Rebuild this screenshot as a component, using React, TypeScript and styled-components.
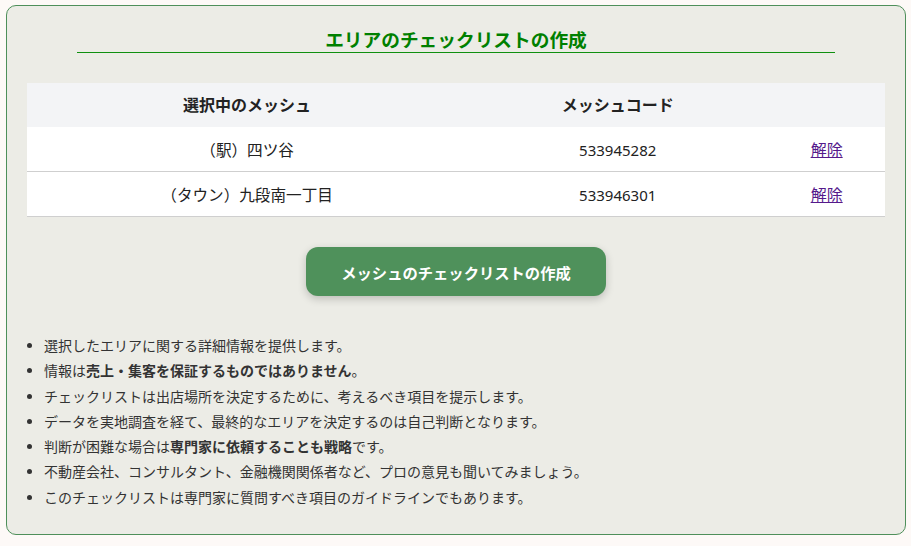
import React from "react";
import styled, { createGlobalStyle } from "styled-components";

const Global = createGlobalStyle`
  html, body { margin: 0; padding: 0; background: #fdf9f7; }
  body { font-family: "Noto Sans", "Noto Sans CJK JP", sans-serif; color: #222; }
`;

const Page = styled.div`
  padding: 5px 5px 10px 6px;
`;

const Card = styled.section`
  background: #ecece6;
  border: 1px solid #4e8f5a;
  border-radius: 10px;
  padding: 21px 20px 22px 20px;
`;

const Title = styled.h2`
  margin: 0 50px 30px;
  font-size: 18.7px;
  line-height: 25px;
  font-weight: 700;
  color: #008000;
  text-align: center;
  border-bottom: 1px solid #109010;
`;

const Table = styled.table`
  width: 100%;
  border-collapse: collapse;
  background: #fff;
`;

const HeadCell = styled.th<{ $w: string }>`
  width: ${(p) => p.$w};
  background: #f3f4f6;
  padding: 12px 8px;
  font-size: 16px;
  line-height: 20px;
  font-weight: 700;
  color: #222;
  text-align: center;
`;

const Row = styled.tr`
  border-bottom: 1px solid #cfcfcf;
`;

const Cell = styled.td<{ $size?: number }>`
  padding: 13px 8px 11px;
  font-size: ${(p) => p.$size ?? 15}px;
  line-height: 20px;
  color: #222;
  text-align: center;
`;

const RemoveLink = styled.a`
  color: #551a8b;
  text-decoration: underline;
  cursor: pointer;
`;

const ButtonRow = styled.div`
  display: flex;
  justify-content: center;
  margin-top: 30px;
`;

const CreateButton = styled.button`
  width: 300px;
  height: 49px;
  border: none;
  border-radius: 12px;
  background: #4f915b;
  color: #fff;
  font-family: "Noto Sans", "Noto Sans CJK JP", sans-serif;
  font-size: 15.3px;
  font-weight: 700;
  box-shadow: 0 3px 8px rgba(0, 0, 0, 0.2);
  cursor: pointer;
`;

const Notes = styled.ul`
  margin: 39px 0 0;
  padding-left: 17px;
  font-size: 14px;
  color: #333;
`;

const Note = styled.li`
  line-height: 21.8px;
  margin: 3.5px 0;
`;

const rows = [
  { name: "（駅）四ツ谷", code: "533945282" },
  { name: "（タウン）九段南一丁目", code: "533946301" },
];

export default function App() {
  return (
    <Page>
      <Global />
      <Card>
        <Title>エリアのチェックリストの作成</Title>
        <Table>
          <thead>
            <tr>
              <HeadCell $w="51.3%">選択中のメッシュ</HeadCell>
              <HeadCell $w="35.1%">メッシュコード</HeadCell>
              <HeadCell $w="13.6%"></HeadCell>
            </tr>
          </thead>
          <tbody>
            {rows.map((r) => (
              <Row key={r.code}>
                <Cell $size={15.6}>{r.name}</Cell>
                <Cell>{r.code}</Cell>
                <Cell $size={16}>
                  <RemoveLink href="#">解除</RemoveLink>
                </Cell>
              </Row>
            ))}
          </tbody>
        </Table>
        <ButtonRow>
          <CreateButton>メッシュのチェックリストの作成</CreateButton>
        </ButtonRow>
        <Notes>
          <Note>選択したエリアに関する詳細情報を提供します。</Note>
          <Note>
            情報は<strong>売上・集客を保証するものではありません</strong>。
          </Note>
          <Note>チェックリストは出店場所を決定するために、考えるべき項目を提示します。</Note>
          <Note>データを実地調査を経て、最終的なエリアを決定するのは自己判断となります。</Note>
          <Note>
            判断が困難な場合は<strong>専門家に依頼することも戦略</strong>です。
          </Note>
          <Note>不動産会社、コンサルタント、金融機関関係者など、プロの意見も聞いてみましょう。</Note>
          <Note>このチェックリストは専門家に質問すべき項目のガイドラインでもあります。</Note>
        </Notes>
      </Card>
    </Page>
  );
}
